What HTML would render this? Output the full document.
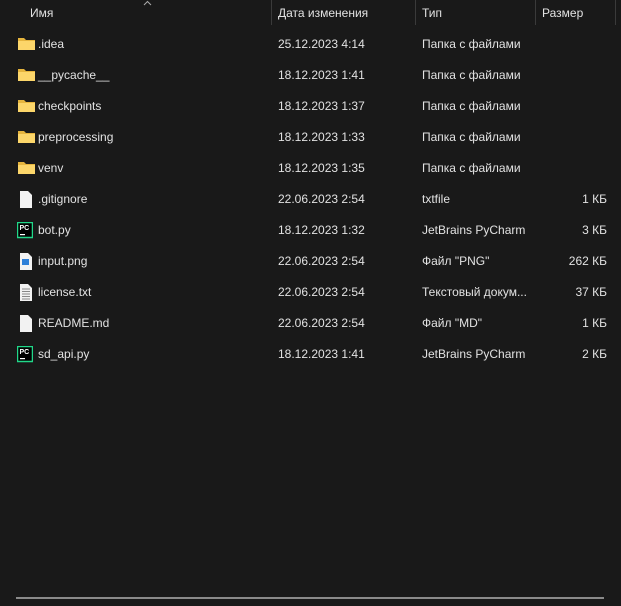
<!DOCTYPE html><html><head><meta charset="utf-8"><style>
body{margin:0;width:621px;height:606px;background:#191919;overflow:hidden;font-family:"Segoe UI","Liberation Sans","DejaVu Sans",sans-serif;font-size:12px;color:#e2e2e2;position:relative}
.a{position:absolute;white-space:nowrap}
.sep{position:absolute;top:0;width:1px;height:25px;background:#3a3a3a}
.r{position:absolute;left:0;width:621px;height:31px}
.r span{position:absolute;top:8px}
.ic{position:absolute;left:18px;top:7px}
</style></head><body>
<div class="a" style="left:30px;top:6px">Имя</div>
<svg class="a" style="left:143px;top:0" width="9" height="6" viewBox="0 0 9 6"><path d="M1 5L4.5 1.5L8 5" fill="none" stroke="#aaa" stroke-width="1"/></svg>
<div class="sep" style="left:271px"></div>
<div class="a" style="left:278px;top:6px">Дата изменения</div>
<div class="sep" style="left:415px"></div>
<div class="a" style="left:422px;top:6px">Тип</div>
<div class="sep" style="left:535px"></div>
<div class="a" style="left:542px;top:6px">Размер</div>
<div class="sep" style="left:615px"></div>

<div id="rows"></div>
<script>
const F='<svg class="ic" width="17" height="15" viewBox="0 0 17 15"><path d="M0 2h6l2 2h9v10H0z" fill="#e6b53e"/><path d="M0 5h17v9H0z" fill="#fcd66a"/></svg>';
const D='<svg class="ic" width="16" height="17" viewBox="0 0 16 17"><path d="M2 0h8l4 4v13H2z" fill="#f2f2f2"/></svg>';
const T='<svg class="ic" width="16" height="17" viewBox="0 0 16 17"><path d="M2 0h8l4 4v13H2z" fill="#f2f2f2"/><path d="M4 5h8M4 7.5h8M4 10h8M4 12.5h8M4 15h8" stroke="#888" stroke-width="1"/></svg>';
const P='<svg class="ic" width="16" height="17" viewBox="0 0 16 17"><path d="M2 0h8l4 4v13H2z" fill="#f2f2f2"/><rect x="4" y="6" width="7" height="6" fill="#2d7fd8"/></svg>';
const C='<svg class="ic" width="16" height="17" viewBox="0 0 16 17" style="left:17px"><rect x="0.5" y="0.5" width="15" height="15" fill="#000" stroke="#21d789" stroke-width="1.5"/><text x="2.5" y="8" font-size="7" font-weight="bold" fill="#fff" font-family="Liberation Sans">PC</text><rect x="3" y="12" width="5" height="1.2" fill="#fff"/></svg>';
const rows=[[F,'.idea','25.12.2023 4:14','Папка с файлами',''],[F,'__pycache__','18.12.2023 1:41','Папка с файлами',''],[F,'checkpoints','18.12.2023 1:37','Папка с файлами',''],[F,'preprocessing','18.12.2023 1:33','Папка с файлами',''],[F,'venv','18.12.2023 1:35','Папка с файлами',''],[D,'.gitignore','22.06.2023 2:54','txtfile','1 КБ'],[C,'bot.py','18.12.2023 1:32','JetBrains PyCharm','3 КБ'],[P,'input.png','22.06.2023 2:54','Файл "PNG"','262 КБ'],[T,'license.txt','22.06.2023 2:54','Текстовый докум...','37 КБ'],[D,'README.md','22.06.2023 2:54','Файл "MD"','1 КБ'],[C,'sd_api.py','18.12.2023 1:41','JetBrains PyCharm','2 КБ']];
let h='';rows.forEach((r,i)=>{h+=`<div class="r" style="top:${29+i*31}px">${r[0]}<span style="left:38px">${r[1]}</span><span style="left:278px">${r[2]}</span><span style="left:422px">${r[3]}</span><span style="right:14px">${r[4]}</span></div>`});
document.getElementById('rows').innerHTML=h;
</script>
<div class="a" style="left:16px;top:597px;width:588px;height:2px;background:#8a8a8a"></div>
</body></html>
